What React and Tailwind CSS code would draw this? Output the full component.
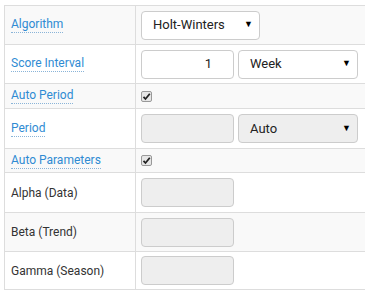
const font = { fontFamily: "Roboto, 'Liberation Sans', sans-serif" };

function Label({ children, link }) {
  if (!link) return <span className="text-[#333] text-[12px]">{children}</span>;
  return (
    <span className="text-[#2f8bd3] text-[12px] border-b border-dotted border-[#8ab4d8] leading-[15px] inline-block">
      {children}
    </span>
  );
}

function Select({ value, disabled, w }) {
  return (
    <div
      className={`${w} h-[29px] flex items-center justify-between pl-[11px] pr-[6px] rounded-[4px] border border-[#ccc] ${
        disabled ? "bg-[#eee]" : "bg-white"
      } text-[#222]`}
    >
      <span>{value}</span>
      <span className="text-[9px] text-black">▼</span>
    </div>
  );
}

function Input({ value, disabled }) {
  return (
    <div
      className={`w-[93px] h-[29px] flex items-center justify-end pr-[21px] rounded-[4px] border border-[#ccc] ${
        disabled ? "bg-[#eee]" : "bg-white"
      } text-[#222]`}
    >
      {value}
    </div>
  );
}

function Check() {
  return (
    <div className="w-[11px] h-[11px] rounded-[2px] border border-[#999] bg-[#e6e6e6] flex items-center justify-center">
      <svg width="9" height="9" viewBox="0 0 9 9">
        <path d="M1.5 4.8 L3.5 7 L7.8 1.8" stroke="#222" strokeWidth="1.8" fill="none" />
      </svg>
    </div>
  );
}

function Row({ label, link, grey, h, children }) {
  return (
    <div className={`flex border-b border-[#ddd] ${grey ? "bg-[#f9f9f9]" : "bg-white"} ${h}`}>
      <div className="w-[131px] shrink-0 border-r border-[#ddd] flex items-center pl-[6px]">
        <Label link={link}>{label}</Label>
      </div>
      <div className="flex-1 flex items-center gap-[4px] pl-[5px]">{children}</div>
    </div>
  );
}

export default function App() {
  return (
    <div className="w-[365px] h-[296px] bg-white overflow-hidden pt-[5px] pl-[4px] text-[13px]" style={font}>
      <div className="w-[420px] border-t border-l border-[#ddd]">
        <Row label="Algorithm" link grey h="h-[39px]">
          <Select value="Holt-Winters" w="w-[119px]" />
        </Row>
        <Row label="Score Interval" link h="h-[39px]">
          <Input value="1" />
          <Select value="Week" w="w-[120px]" />
        </Row>
        <Row label="Auto Period" link grey h="h-[25px]">
          <Check />
        </Row>
        <Row label="Period" link h="h-[40px]">
          <Input disabled />
          <Select value="Auto" disabled w="w-[120px]" />
        </Row>
        <Row label="Auto Parameters" link grey h="h-[24px]">
          <Check />
        </Row>
        <Row label="Alpha (Data)" h="h-[40px]">
          <Input disabled />
        </Row>
        <Row label="Beta (Trend)" grey h="h-[39px]">
          <Input disabled />
        </Row>
        <Row label="Gamma (Season)" h="h-[38px]">
          <Input disabled />
        </Row>
      </div>
    </div>
  );
}
